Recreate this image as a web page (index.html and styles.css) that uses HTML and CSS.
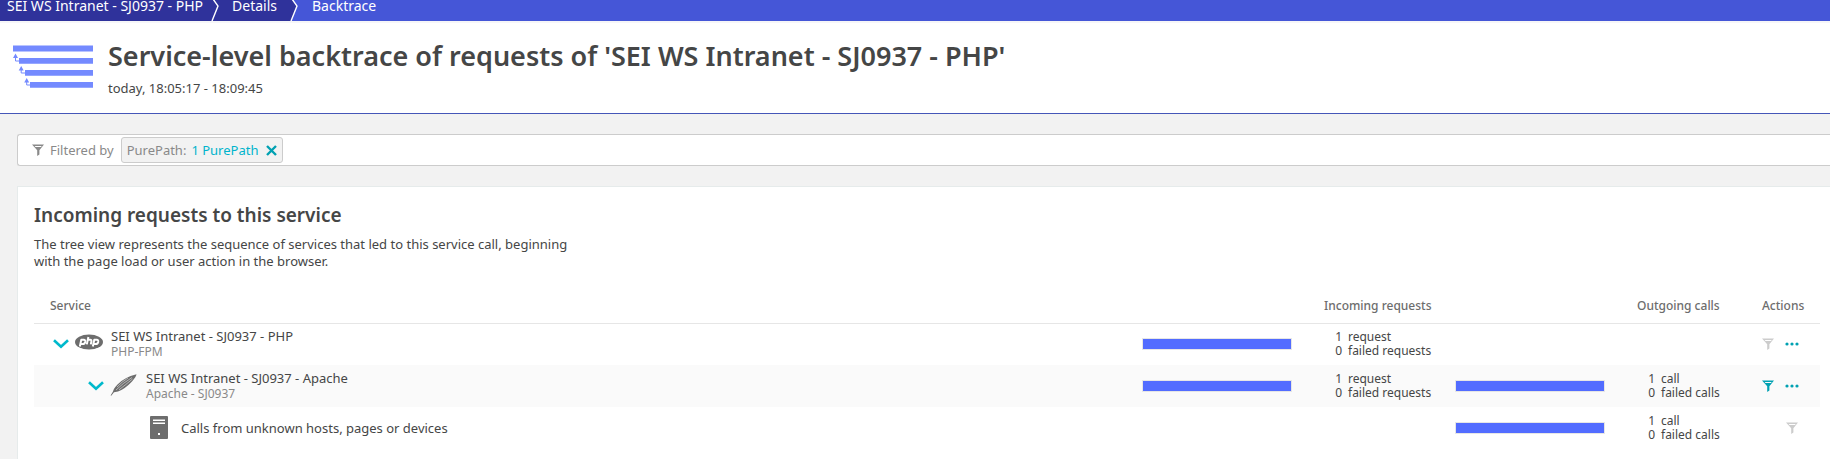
FILE: index.html
```html
<!DOCTYPE html>
<html lang="en">
<head>
<meta charset="utf-8">
<title>Service-level backtrace</title>
<link rel="stylesheet" href="styles.css">
</head>
<body>
<svg class="defs" width="0" height="0" aria-hidden="true">
  <symbol id="funnel" viewBox="0 0 12 12">
    <path fill="currentColor" fill-rule="evenodd" d="M0 .5H12L7.4 6.2V10.5L5.2 12V6.2ZM2.6 2L3.5 3.1H8.9L9.8 2Z"/>
  </symbol>
  <symbol id="dots" viewBox="0 0 14 4">
    <g fill="currentColor"><circle cx="2" cy="2" r="1.6"/><circle cx="7" cy="2" r="1.6"/><circle cx="12" cy="2" r="1.6"/></g>
  </symbol>
  <symbol id="chevron" viewBox="0 0 16 10">
    <path fill="none" stroke="currentColor" stroke-width="2.6" d="M1 1.2L8 7.8L15 1.2"/>
  </symbol>
</svg>

<nav class="crumbs" aria-label="Breadcrumb">
  <a class="crumb crumb-first" href="#">SEI WS Intranet - SJ0937 - PHP</a>
  <svg class="crumb-sep" viewBox="0 0 8 21" aria-hidden="true"><path fill="none" stroke="#fff" stroke-width="1.4" d="M2 -1L7 6L1 21"/></svg>
  <a class="crumb" href="#">Details</a>
  <svg class="crumb-sep" viewBox="0 0 8 21" aria-hidden="true"><path fill="#4556d7" d="M2 -1L7 6L1 21H8V-1Z"/><path fill="none" stroke="#fff" stroke-width="1.4" d="M2 -1L7 6L1 21"/></svg>
  <a class="crumb crumb-current" href="#" aria-current="page">Backtrace</a>
</nav>

<header class="page-head">
  <svg class="head-icon" viewBox="0 0 80 44" aria-hidden="true">
    <g fill="#748aff"><path d="M0 .6H80V6.4H0ZM6 13H80V18.800H6ZM12 25H80V30.800H12ZM17 37H80V42.800H17Z"/>
    <path d="M2.500 8.500L5 13H0ZM8.200 21L10.700 25.500H5.700ZM13.700 33L16.200 37.500H11.200Z"/></g>
    <path fill="none" stroke="#748aff" d="M2.500 12V16H6M8.200 24V28H12M13.700 36V40H17"/>
  </svg>
  <div>
    <h1 class="title">Service-level backtrace of requests of 'SEI WS Intranet - SJ0937 - PHP'</h1>
    <p class="timeframe">today, 18:05:17 - 18:09:45</p>
  </div>
</header>

<main class="content">
  <div class="filter-bar">
    <svg class="icon-funnel" aria-hidden="true"><use href="#funnel"/></svg>
    <span class="filter-label">Filtered by</span>
    <span class="chip">
      <span>PurePath:</span>
      <a class="chip-value" href="#">1 PurePath</a>
      <button class="icon-btn chip-remove" type="button" aria-label="Remove filter">
        <svg class="icon-x" viewBox="0 0 11 11" aria-hidden="true"><path fill="none" stroke="currentColor" stroke-width="2.400" d="M1 1L10 10M10 1L1 10"/></svg>
      </button>
    </span>
  </div>

  <section class="card">
    <h2 class="card-title">Incoming requests to this service</h2>
    <p class="card-text">The tree view represents the sequence of services that led to this service call, beginning with the page load or user action in the browser.</p>

    <table class="tree">
      <colgroup>
        <col><col class="col-bar"><col class="col-in"><col class="col-bar"><col class="col-out"><col class="col-actions">
      </colgroup>
      <thead>
        <tr>
          <th class="th-service" scope="col">Service</th>
          <td></td>
          <th scope="col">Incoming requests</th>
          <td></td>
          <th scope="col">Outgoing calls</th>
          <th scope="col">Actions</th>
        </tr>
      </thead>
      <tbody>
        <tr>
          <td>
            <div class="service">
              <button class="icon-btn toggle" type="button" aria-label="Collapse"><svg class="icon-chevron" aria-hidden="true"><use href="#chevron"/></svg></button>
              <svg class="icon-tech" viewBox="0 0 28 24" aria-hidden="true">
                <ellipse cx="14" cy="10" rx="14" ry="7.500" fill="#6d6d6d"/>
                <g fill="none" stroke="#fff" stroke-width="2" stroke-linejoin="round">
                  <path d="M4.800 14.500L6.300 7.700H8.600Q10.600 7.900 10.200 9.900Q9.700 12 7.600 12H5.800"/>
                  <path d="M13.400 5L11.800 12.400M13 7.700H15.200Q16.700 7.800 16.400 9.400L15.800 12.400"/>
                  <path d="M17.800 14.500L19.300 7.700H21.600Q23.600 7.900 23.200 9.900Q22.700 12 20.600 12H18.800"/>
                </g>
              </svg>
              <div><a class="name" href="#">SEI WS Intranet - SJ0937 - PHP</a><span class="sub">PHP-FPM</span></div>
            </div>
          </td>
          <td><div class="bar"></div></td>
          <td><div class="counts"><span class="num">1</span><span>request</span><span class="num">0</span><span>failed requests</span></div></td>
          <td></td>
          <td></td>
          <td>
            <div class="actions">
              <button class="icon-btn muted" type="button" aria-label="Filter"><svg class="icon-funnel" aria-hidden="true"><use href="#funnel"/></svg></button>
              <button class="icon-btn" type="button" aria-label="More"><svg class="icon-dots" aria-hidden="true"><use href="#dots"/></svg></button>
            </div>
          </td>
        </tr>
        <tr class="alt">
          <td>
            <div class="service level-2">
              <button class="icon-btn toggle" type="button" aria-label="Collapse"><svg class="icon-chevron" aria-hidden="true"><use href="#chevron"/></svg></button>
              <svg class="icon-tech" viewBox="0 0 28 24" aria-hidden="true">
                <path fill="#6d6d6d" d="M.6 21.600L3 17.500Q3.500 14.500 7.500 10.500Q14 3.500 26.500 .3Q26 3 22 7.500Q15 15 8 17.500L4 18.300L1.200 21.800Z"/>
                <path fill="none" stroke="#fafafa" stroke-width=".5" d="M6 16Q13 9 22 3.500M9 15.800Q16 10.500 22.500 5M7 13Q12 7.500 18 4"/>
              </svg>
              <div><a class="name" href="#">SEI WS Intranet - SJ0937 - Apache</a><span class="sub">Apache - SJ0937</span></div>
            </div>
          </td>
          <td><div class="bar"></div></td>
          <td><div class="counts"><span class="num">1</span><span>request</span><span class="num">0</span><span>failed requests</span></div></td>
          <td><div class="bar"></div></td>
          <td><div class="counts"><span class="num">1</span><span>call</span><span class="num">0</span><span>failed calls</span></div></td>
          <td>
            <div class="actions">
              <button class="icon-btn" type="button" aria-label="Filter"><svg class="icon-funnel" aria-hidden="true"><use href="#funnel"/></svg></button>
              <button class="icon-btn" type="button" aria-label="More"><svg class="icon-dots" aria-hidden="true"><use href="#dots"/></svg></button>
            </div>
          </td>
        </tr>
        <tr>
          <td>
            <div class="service level-3">
              <svg class="icon-tech" viewBox="0 0 28 24" aria-hidden="true">
                <rect x="5" y="0" width="18" height="23" rx="1" fill="#6d6d6d"/>
                <path fill="#fff" d="M8 3.500H20V5H8ZM8 6.500H20V8H8ZM13 17H15V19H13Z"/>
              </svg>
              <span class="name">Calls from unknown hosts, pages or devices</span>
            </div>
          </td>
          <td></td>
          <td></td>
          <td><div class="bar"></div></td>
          <td><div class="counts"><span class="num">1</span><span>call</span><span class="num">0</span><span>failed calls</span></div></td>
          <td>
            <div class="actions actions-single">
              <button class="icon-btn muted" type="button" aria-label="Filter"><svg class="icon-funnel" aria-hidden="true"><use href="#funnel"/></svg></button>
            </div>
          </td>
        </tr>
      </tbody>
    </table>
  </section>
</main>
</body>
</html>
```
FILE: styles.css
```css
* { box-sizing: border-box; }

body {
  margin: 0;
  min-height: 100vh;
  display: flex;
  flex-direction: column;
  background: #f2f2f2;
  color: #454646;
  font: 13px/16px "Noto Sans", "Open Sans", sans-serif;
}

h1, h2, p { margin: 0; }
a { color: inherit; text-decoration: none; }
svg { display: block; flex: none; }
.defs { position: absolute; }

.icon-btn {
  padding: 0;
  border: 0;
  background: none;
  color: #00a1b2;
  cursor: pointer;
}

.crumbs {
  display: flex;
  height: 21px;
  background: #4556d7;
  color: #fff;
  font-size: 14px;
  line-height: 12px;
}
.crumb { background: #2f329b; padding: 0 13px; }
.crumb-first { padding: 0 8px 0 7px; }
.crumb-current { background: none; padding-left: 14px; }
.crumb-sep { width: 8px; height: 21px; background: #2f329b; }

.page-head {
  display: flex;
  gap: 15px;
  padding: 17px 13px;
  border-top: 2px solid #f6f6f8;
  border-bottom: 1px solid #4556b8;
  background: #fff;
}
.head-icon { width: 80px; height: 44px; margin-top: 5px; }
.title { font-size: 27px; line-height: 32px; font-weight: 600; }
.timeframe { padding-top: 8px; }

.content {
  flex: 1;
  display: flex;
  flex-direction: column;
  gap: 20px;
  padding: 20px 0 0 17px;
}

.filter-bar {
  display: flex;
  align-items: center;
  height: 32px;
  padding-left: 14px;
  border: 1px solid #ccc;
  border-right: 0;
  border-radius: 3px 0 0 3px;
  background: #fff;
  color: #898989;
}
.filter-label { padding: 0 7px 0 6px; }
.chip {
  display: flex;
  align-items: center;
  height: 26px;
  padding: 0 5px;
  border: 1px solid #ccc;
  border-radius: 3px;
  background: #f2f2f2;
}
.chip-value { padding: 0 8px 0 5px; color: #00b4cc; }

.card {
  flex: 1;
  padding: 16px 10px 8px 16px;
  border: 1px solid #e6ebeb;
  border-width: 1px 0 0 1px;
  background: #fff;
}
.card-title { font-size: 19px; line-height: 24px; font-weight: 600; }
.card-text { max-width: 560px; padding-top: 9px; line-height: 17px; }

.tree {
  width: 100%;
  margin-top: 20px;
  table-layout: fixed;
  border-collapse: collapse;
}
.tree th, .tree td { padding: 0; text-align: left; }
.tree thead th {
  height: 33px;
  color: #6d6d6d;
  font-size: 12px;
  font-weight: 500;
}
.tree thead { border-bottom: 1px solid #e6e6e6; }
.tree tbody tr { height: 42px; }
.tree .th-service { padding-left: 16px; }
.alt { background: #fafafa; }
.col-bar { width: 182px; }
.col-in { width: 131px; }
.col-out { width: 125px; }
.col-actions { width: 58px; }

.service { display: flex; align-items: center; padding-left: 19px; }
.level-2 { padding-left: 54px; }
.level-3 { padding-left: 111px; }
.toggle { margin-right: 6px; color: #00b9cc; }
.icon-tech { width: 28px; height: 24px; margin-right: 8px; }
.name, .sub { display: block; }
.sub { color: #898989; font-size: 12px; }

.bar { width: 150px; height: 12px; border: 1px solid #e6e6e6; background: #526cff; }

.counts {
  display: grid;
  grid-template-columns: 18px 1fr;
  column-gap: 6px;
  font-size: 12px;
  line-height: 14px;
}
.num { text-align: right; }

.actions { display: flex; align-items: center; gap: 11px; }
.actions-single { padding-left: 24px; }
.muted { color: #ccc; }

.icon-funnel { width: 12px; height: 12px; }
.icon-dots { width: 14px; height: 4px; }
.icon-chevron { width: 16px; height: 10px; }
.icon-x { width: 11px; height: 11px; }
```
